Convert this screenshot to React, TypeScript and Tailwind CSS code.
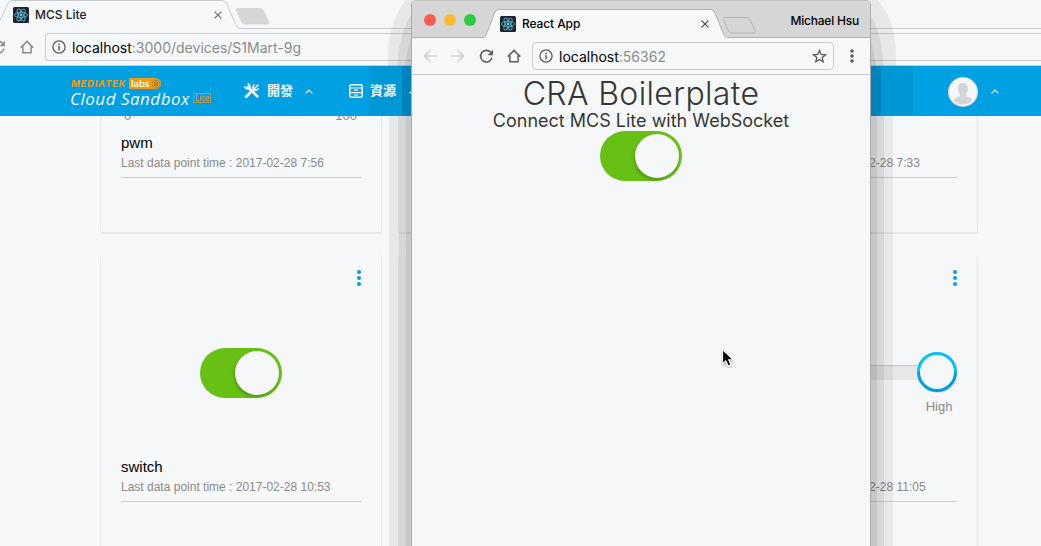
import React from "react";

const ui = "font-['Inter',sans-serif]";

function ReactLogo() {
  return (
    <svg width="16" height="16" viewBox="0 0 16 16" className="shrink-0">
      <rect width="16" height="16" rx="1.5" fill="#222527" />
      <g fill="none" stroke="#4fb3cf" strokeWidth="0.9">
        <ellipse cx="8" cy="8" rx="6.6" ry="2.6" />
        <ellipse cx="8" cy="8" rx="6.6" ry="2.6" transform="rotate(60 8 8)" />
        <ellipse cx="8" cy="8" rx="6.6" ry="2.6" transform="rotate(120 8 8)" />
      </g>
      <circle cx="8" cy="8" r="1.4" fill="#5fd0ee" />
    </svg>
  );
}

function HomeIcon({ color }: { color: string }) {
  return (
    <svg width="14" height="14" viewBox="0 0 14 14" fill="none" stroke={color} strokeWidth="1.5" className="shrink-0">
      <path d="M0.8 7.6 7 1.4l6.2 6.2M2.9 6.5v6.2h8.2V6.5" />
    </svg>
  );
}

function ReloadIcon({ color }: { color: string }) {
  return (
    <svg width="15" height="15" viewBox="0 0 15 15" className="shrink-0">
      <path d="M11.6 3.2A5.8 5.8 0 1 0 13 8.6" fill="none" stroke={color} strokeWidth="1.6" />
      <path d="M14 0.8v5.4H8.6z" fill={color} />
    </svg>
  );
}

function InfoIcon() {
  return (
    <svg width="14" height="14" viewBox="0 0 14 14" className="shrink-0">
      <circle cx="7" cy="7" r="6.1" fill="none" stroke="#5c5c5c" strokeWidth="1.3" />
      <path d="M6.3 3.4h1.5v1.5H6.3zM6.3 6h1.5v4.6H6.3z" fill="#5c5c5c" />
    </svg>
  );
}

function Close({ color }: { color: string }) {
  return (
    <svg width="8" height="8" viewBox="0 0 8 8" className="shrink-0" stroke={color} strokeWidth="1.3">
      <path d="M0.6 0.6l6.8 6.8M7.4 0.6L0.6 7.4" />
    </svg>
  );
}

function Caret() {
  return (
    <svg width="8" height="5" viewBox="0 0 8 5" fill="none" stroke="#f6f7f9" strokeWidth="1.1" className="shrink-0">
      <path d="M0.6 4.4 4 1l3.4 3.4" />
    </svg>
  );
}

function Toggle() {
  return (
    <div className="flex h-[50px] w-[82px] shrink-0 justify-end rounded-full bg-[#67c013] p-[3px]">
      <div className="h-[44px] w-[44px] rounded-full bg-[#f6f7f9] shadow-[-1px_2px_3px_rgba(20,60,0,0.3)]" />
    </div>
  );
}

function Dots() {
  return (
    <svg width="4" height="16" viewBox="0 0 4 16" fill="#00a0e0">
      <circle cx="2" cy="2" r="2" />
      <circle cx="2" cy="8" r="2" />
      <circle cx="2" cy="14" r="2" />
    </svg>
  );
}

function CardFooter({ name, time }: { name?: string; time: string }) {
  return (
    <div className="border-b border-[#cfd0d2] pb-[5px]">
      <div className="h-[20px] text-[15px] leading-[20px] text-black">{name}</div>
      <div className="mt-px h-[18px] text-[12px] leading-[18px] whitespace-nowrap text-[#8b8b86]">
        Last data point time : {time}
      </div>
    </div>
  );
}

function TopCard({ name, time, min, max }: { name?: string; time?: string; min?: string; max?: string }) {
  return (
    <div className="h-[118px] w-[282px] overflow-hidden rounded-b-[4px] border border-t-0 border-b-2 border-[#e6e7e8] px-[20px]">
      <div className="-mt-[8px] flex h-[15px] justify-between pr-[4px] pl-[3px] text-[13px] leading-[15px] text-[#8b8b86]">
        <span>{min}</span>
        <span>{max}</span>
      </div>
      <div className="pt-[10px]">{time && <CardFooter name={name} time={time} />}</div>
    </div>
  );
}

function BottomCard({ name, time, children }: { name?: string; time?: string; children?: React.ReactNode }) {
  return (
    <div className="h-[302px] w-[282px] rounded-[4px] border border-t-0 border-[#e6e7e8] px-[20px]">
      <div className="flex h-[31px] items-end justify-end">{time && <Dots />}</div>
      <div className="flex h-[171px] items-center justify-center pt-[2px]">{children}</div>
      {time && <CardFooter name={name} time={time} />}
    </div>
  );
}

function RangeSwitch() {
  return (
    <div className="relative w-full">
      <div className="mr-[36px] h-[15px] border-t border-[#c9caca] bg-[#e6e7e7]" />
      <div className="absolute -top-[13px] right-0">
        <svg width="40" height="42" viewBox="0 0 40 42" className="block">
          <circle cx="21" cy="21.4" r="19.5" fill="#d9dadb" />
          <circle cx="20" cy="20" r="18.5" fill="#f6f7f9" />
          <path d="M1.5 20a18.5 18.5 0 0 1 37 0" fill="none" stroke="#08c0fa" strokeWidth="3" />
          <path d="M1.5 20a18.5 18.5 0 0 0 37 0" fill="none" stroke="#00a0e0" strokeWidth="3" />
        </svg>
        <div className="mt-[5px] ml-[4px] text-center text-[13px] leading-[16px] text-[#8b8b86]">High</div>
      </div>
    </div>
  );
}

function BrandLogo() {
  return (
    <div className="ml-[70px] w-[142px] pt-[12px]">
      <div className="flex h-[11px] items-center">
        <span className="w-[59px] pl-px font-['Inter',sans-serif] text-[9.5px] leading-[11px] font-bold tracking-[0.7px] text-[#f39a0b] italic">
          MEDIATEK
        </span>
        <span className="flex h-[11px] w-[32px] shrink-0 items-center justify-between rounded-[2px] rounded-r-full bg-[#f39a0b] pl-[2px] font-['Open_Sans',sans-serif] text-[9.5px] leading-[10px] font-semibold tracking-[-0.1px] text-white">
          labs
          <svg width="10" height="10" viewBox="0 0 10 10" fill="none" stroke="#a98338" strokeWidth="0.8" className="shrink-0">
            <circle cx="5" cy="5" r="4" />
            <circle cx="5" cy="5" r="1.8" />
            <path d="M2 2l6 6M8 2L2 8M5 1v8" />
          </svg>
        </span>
      </div>
      <div className="flex h-[20px] items-center">
        <span className="w-[123px] shrink-0 font-['Open_Sans',sans-serif] text-[17px] leading-[20px] tracking-[0.5px] whitespace-nowrap text-[#f6f7f9] italic">
          Cloud Sandbox
        </span>
        <span className="-mt-[3px] flex h-[10px] w-[18px] shrink-0 items-center justify-center border border-[#b09a4a] font-['Open_Sans',sans-serif] text-[8.5px] leading-[8px] text-[#e59d1c]">
          Lite
        </span>
      </div>
    </div>
  );
}

function SiteHeader() {
  return (
    <header className="relative flex h-[50px] shrink-0 bg-[#00a0e2] font-['Liberation_Sans','Noto_Sans_CJK_TC',sans-serif] text-white">
      <div className="absolute top-0 left-[369px] h-[50px] w-[544px] bg-[#0097d6]" />
      <div className="absolute top-0 left-[402px] h-[50px] w-[479px] bg-[#0083ba]" />
      <BrandLogo />
      <nav className="relative flex h-[50px] items-center pl-[32px] text-[13px] font-bold text-[#f6f7f9]">
        <svg width="16" height="16" viewBox="0 0 16 16" fill="none" stroke="#f6f7f9" className="shrink-0">
          <path d="M4 4.2 13.4 13.4" strokeWidth="2.6" strokeLinecap="round" />
          <path d="M0.8 3.4a3.2 3.2 0 0 0 4.4 2.2M3.6 0.8a3.2 3.2 0 0 1 2 4" strokeWidth="1.8" />
          <path d="M2.2 13.8 8.4 7.6" strokeWidth="2.8" strokeLinecap="round" />
          <path d="M9.6 6.4l4.8-4.8" strokeWidth="1.5" />
          <path d="M10.4 1.4 8.6 4.6l2.8 2.8 3.4-1.8" strokeWidth="1.6" />
        </svg>
        <span className="-mt-px ml-[7px]">開發</span>
        <span className="ml-[12px] flex"><Caret /></span>
        <svg width="14" height="14" viewBox="0 0 14 14" fill="none" stroke="#f6f7f9" strokeWidth="1.5" className="ml-[36px] shrink-0">
          <rect x="0.8" y="0.8" width="12.4" height="12.4" rx="1.5" />
          <path d="M1 4h12M1 8.6h12M5 6.2h4M5 11h4" strokeWidth="1.2" />
        </svg>
        <span className="-mt-px ml-[7px]">資源</span>
        <span className="ml-[13px] flex"><Caret /></span>
      </nav>
      <div className="relative mr-[42px] ml-auto flex items-center gap-[13px]">
        <svg width="30" height="30" viewBox="0 0 30 30" className="mt-[2px]">
          <circle cx="15" cy="15" r="15" fill="#d3d4d4" />
          <circle cx="15" cy="15" r="13.9" fill="#f6f7f9" />
          <path d="M15 6c-3.4 0-5 2.2-5 5.3 0 2.2.6 4 1.7 5.3v3c-2.5.8-5 1.6-6 3.6A12.5 12.5 0 0 0 15 27.600a12.500 12.500 0 0 0 9.300-4.400c-1-2-3.500-2.800-6-3.600v-3c1.100-1.300 1.700-3.100 1.700-5.300C20 8.200 18.400 6 15 6z" fill="#d3d4d4" />
        </svg>
        <Caret />
      </div>
    </header>
  );
}

function BackWindow() {
  return (
    <div className="flex h-[546px] w-[1041px] flex-col bg-[#f6f7f9]">
      <div className="relative flex h-[29px] shrink-0 items-center pt-[1px] pl-[13px]">
        <svg width="1041" height="29" viewBox="0 0 1041 29" fill="none" className="absolute top-0 left-0">
          <path d="M0 20.500 8 3.500Q9.500 0.500 12 0.500H222Q225 0.500 226.500 3.500L236 25Q237.500 28.500 240 28.500H1041" stroke="#cbccce" />
          <path d="M238 8.500h22q2.500 0 3.500 2l5 11.500q1 2-1.500 2h-22q-2.500 0-3.500-2L236.500 10.500q-1-2 1.500-2z" fill="#d5d6d5" stroke="#cbccce" strokeWidth="0.6" />
        </svg>
        <ReactLogo />
        <span className={`${ui} ml-[6px] w-[179px] text-[12px] leading-[16px] font-medium text-[#222]`}>MCS Lite</span>
        <Close color="#707070" />
      </div>
      <div className="flex h-[37px] shrink-0 items-center border-b border-[#cbccce]">
        <div className="-ml-[9px] flex items-center gap-[14px]">
          <ReloadIcon color="#8c8c8c" />
          <HomeIcon color="#8c8c8c" />
        </div>
        <div className="ml-[11px] flex h-[28px] flex-1 items-center rounded-l-[4px] border border-r-0 border-[#cbccce] pl-[6px]">
          <InfoIcon />
          <span className={`${ui} mt-px ml-[6px] text-[14px] leading-[20px] text-black`}>
            localhost<span className="text-[#8c8c88]">:3000/devices/S1Mart-9g</span>
          </span>
        </div>
      </div>
      <SiteHeader />
      <main className="flex flex-1 flex-col gap-[21px] overflow-hidden pl-[100px] font-['Liberation_Sans',sans-serif]">
        <div className="flex gap-[16px]">
          <TopCard name="pwm" time="2017-02-28 7:56" min="0" max="100" />
          <TopCard />
          <TopCard time="2017-02-28 7:33" />
        </div>
        <div className="flex gap-[16px]">
          <BottomCard name="switch" time="2017-02-28 10:53"><Toggle /></BottomCard>
          <BottomCard />
          <BottomCard time="2017-02-28 11:05"><RangeSwitch /></BottomCard>
        </div>
      </main>
    </div>
  );
}

function WindowShadow() {
  return (
    <>
      <div className="absolute top-0 left-0 h-[66px] w-[1041px] overflow-hidden">
        <div className="absolute -top-[16px] left-[388px] h-[200px] w-[508px] rounded-[50px/70px] bg-black/6" />
        <div className="absolute top-[4px] left-[397px] h-[200px] w-[487px] rounded-[30px/70px] bg-black/7" />
        <div className="absolute top-[18px] left-[404px] h-[200px] w-[473px] rounded-[24px/70px] bg-black/7" />
      </div>
      <div className="absolute top-[116px] left-0 h-[430px] w-[1041px] overflow-hidden">
        <div className="absolute top-0 left-[389px] h-[430px] w-[504px] bg-black/6" />
        <div className="absolute top-0 left-[399px] h-[430px] w-[485px] bg-black/7" />
        <div className="absolute top-0 left-[406px] h-[430px] w-[471px] bg-black/7" />
      </div>
    </>
  );
}

function FrontWindow() {
  return (
    <div className="absolute top-0 left-[411px] flex h-[560px] w-[460px] flex-col overflow-hidden rounded-t-[5px] border border-[#a9abad] border-t-[#c4c5c5] bg-[#f6f7f9]">
      <div className="relative flex h-[37px] shrink-0 bg-[#d5d6d5]">
        <svg width="458" height="37" viewBox="0 0 458 37" className="absolute top-0 left-0">
          <path d="M0 36.500H71Q73 36.500 74 34L83 11Q84.500 8.500 87 8.500H299Q301.500 8.500 302.500 11L312 34Q313 36.500 315.500 36.500H458V38H0z" fill="#f6f7f9" stroke="#b0b1b1" />
          <path d="M313 16.500h22q2 0 3 2l5 11q1 2.500-1.500 2.500h-22q-2 0-3-2L311.500 18.500q-1-2 1.500-2z" fill="none" stroke="#b5b6b6" />
        </svg>
        <div className="relative flex h-[37px] w-full items-center">
          <div className="flex gap-[8px] pl-[12px]">
            <span className="h-[12px] w-[12px] rounded-full bg-[#fc5b54]" />
            <span className="h-[12px] w-[12px] rounded-full bg-[#fdbb2f]" />
            <span className="h-[12px] w-[12px] rounded-full bg-[#28cb42]" />
          </div>
          <div className="mt-[9px] ml-[24px] flex items-center">
            <ReactLogo />
            <span className={`${ui} ml-[6px] w-[179px] text-[12px] leading-[16px] font-medium tracking-[-0.1px] text-black`}>React App</span>
            <Close color="#505050" />
          </div>
          <span className={`${ui} mt-[2px] mr-[11px] ml-auto text-[12px] leading-[16px] font-medium tracking-[-0.2px] text-black`}>Michael Hsu</span>
        </div>
      </div>
      <div className="flex h-[37px] shrink-0 items-center border-b border-[#cbccce]">
        <svg width="42" height="14" viewBox="0 0 42 14" fill="none" stroke="#d0d1d2" strokeWidth="1.500" className="ml-[11px]">
          <path d="M14 7H1.500M7.500 1L1.500 7l6 6M28 7h12.500M34.500 1l6 6-6 6" />
        </svg>
        <div className="ml-[14px] flex items-center gap-[13px]">
          <ReloadIcon color="#5c5c5c" />
          <HomeIcon color="#5c5c5c" />
        </div>
        <div className="ml-[11px] flex h-[28px] w-[302px] items-center rounded-[4px] border border-[#cbccce] pr-[6px] pl-[6px]">
          <InfoIcon />
          <span className={`${ui} mt-px ml-[6px] flex-1 text-[14px] leading-[20px] text-black`}>
            localhost<span className="text-[#8c8c88]">:56362</span>
          </span>
          <svg width="15" height="14" viewBox="0 0 15 14" fill="none" stroke="#5c5c5c" strokeWidth="1.300">
            <path d="M7.500 1.500l1.700 4 4.300.3-3.300 2.800 1 4.200-3.700-2.300-3.700 2.300 1-4.200L1.500 5.800l4.300-.3z" />
          </svg>
        </div>
        <svg width="4" height="14" viewBox="0 0 4 14" fill="#5c5c5c" className="ml-[16px]">
          <circle cx="2" cy="2" r="1.800" />
          <circle cx="2" cy="7" r="1.800" />
          <circle cx="2" cy="12" r="1.800" />
        </svg>
      </div>
      <div className="flex flex-col items-center font-['Inter',sans-serif] text-[#363731]">
        <h1 className="h-[36px] text-[32px] leading-[37px] font-light tracking-[0.35px] whitespace-nowrap">CRA Boilerplate</h1>
        <h3 className="h-[20px] text-[18px] leading-[20px] whitespace-nowrap">Connect MCS Lite with WebSocket</h3>
        <Toggle />
      </div>
    </div>
  );
}

export default function App() {
  return (
    <div className="relative h-[546px] w-[1041px] overflow-hidden">
      <BackWindow />
      <WindowShadow />
      <FrontWindow />
      <svg width="14" height="20" viewBox="0 0 14 20" className="absolute top-[348px] left-[721px]">
        <path d="M1.500 1.500v14.500l3.400-3.100 2.200 5.200 2.900-1.200-2.200-5h4.700z" fill="#000" stroke="#fff" strokeWidth="1.200" className="drop-shadow-[0_1px_1px_rgba(0,0,0,0.350)]" />
      </svg>
    </div>
  );
}
